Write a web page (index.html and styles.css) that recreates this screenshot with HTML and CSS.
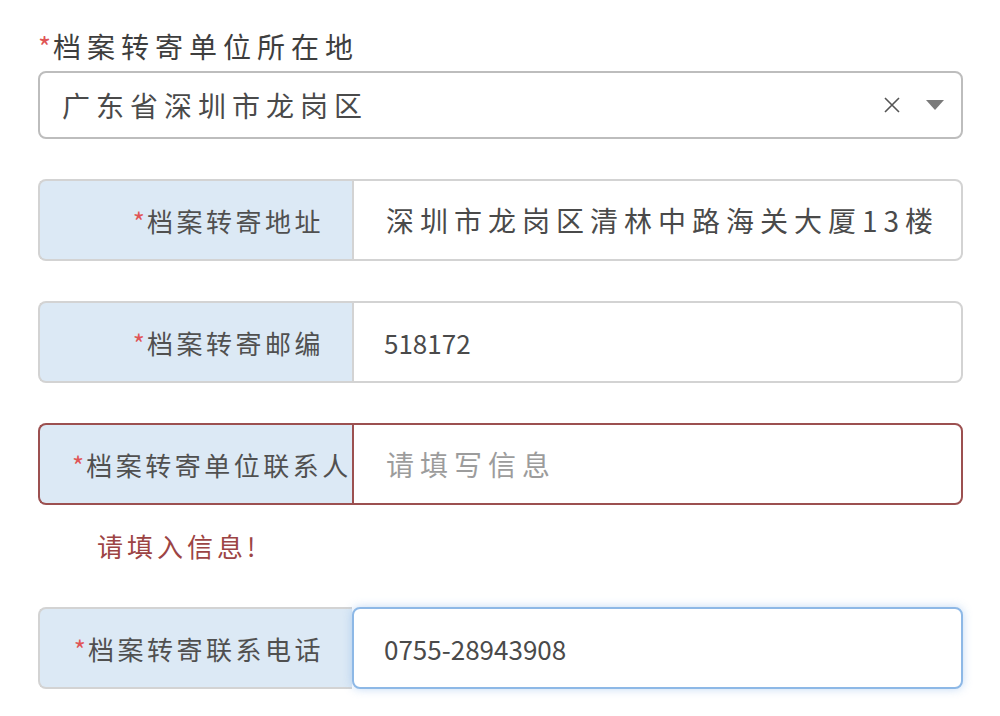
FILE: index.html
```html
<!DOCTYPE html>
<html lang="zh-CN">
<head>
    <meta charset="UTF-8">
    <meta name="viewport" content="width=device-width, initial-scale=1.0">
    <title>档案转寄信息</title>
    <link rel="stylesheet" href="styles.css">
</head>
<body>
    <form class="form">
        <!-- 所在地 -->
        <div class="block-label"><span class="req">*</span>档案转寄单位所在地</div>
        <div class="select">
            <span class="select-value">广东省深圳市龙岗区</span>
            <span class="select-clear">
                <svg width="18" height="18" viewBox="0 0 18 18">
                    <path d="M2 2 L16 16 M16 2 L2 16" stroke="#555" stroke-width="1.6" fill="none" />
                </svg>
            </span>
            <span class="select-arrow">
                <svg width="20" height="12" viewBox="0 0 20 12">
                    <path d="M1 1 L19 1 L10 11 Z" fill="#7a7a7a" />
                </svg>
            </span>
        </div>

        <div class="field">
            <label class="field-label"><span class="req">*</span>档案转寄地址</label>
            <input class="field-input" type="text" value="深圳市龙岗区清林中路海关大厦13楼">
        </div>

        <div class="field">
            <label class="field-label"><span class="req">*</span>档案转寄邮编</label>
            <input class="field-input num" type="text" value="518172">
        </div>

        <div class="field is-error">
            <label class="field-label"><span class="req">*</span>档案转寄单位联系人</label>
            <input class="field-input" type="text" placeholder="请填写信息">
        </div>
        <div class="error-msg">请填入信息!</div>

        <div class="field is-focus">
            <label class="field-label"><span class="req">*</span>档案转寄联系电话</label>
            <input class="field-input num" type="text" value="0755-28943908">
        </div>
    </form>
</body>
</html>
```

FILE: styles.css
```css
body {
    margin: 0;
    background: #fff;
    font-family: "Noto Sans CJK SC", "Noto Sans", sans-serif;
    color: #4a4a4a;
}
.form {
    padding: 26px 37px 20px 38px;
}
.req {
    color: #e05555;
    letter-spacing: 0;
    margin-right: 2px;
}
.block-label {
    font-size: 28px;
    line-height: 40px;
    letter-spacing: 6px;
    color: #3e3e3e;
}
.select {
    margin-top: 5px;
    height: 68px;
    box-sizing: border-box;
    border: 2px solid #bdbdbd;
    border-radius: 8px;
    display: flex;
    align-items: center;
    padding: 0 16px 0 22px;
}
.select-value {
    flex: 1;
    font-size: 28px;
    letter-spacing: 6px;
}
.select-clear {
    display: flex;
    margin-right: 24px;
}
.select-arrow {
    display: flex;
}
.field {
    display: flex;
    height: 82px;
    margin-top: 40px;
}
.field-label {
    width: 314px;
    box-sizing: border-box;
    flex-shrink: 0;
    background: #dce9f5;
    border: 2px solid #d3d3d3;
    border-right: none;
    border-radius: 8px 0 0 8px;
    display: flex;
    align-items: center;
    justify-content: flex-end;
    padding: 0 28px 0 32px;
    font-size: 26px;
    letter-spacing: 3.5px;
    white-space: nowrap;
    color: #505050;
}
.field-input {
    flex: 1;
    min-width: 0;
    margin: 0;
    box-sizing: border-box;
    border: 2px solid #d3d3d3;
    border-radius: 0 8px 8px 0;
    background: #fff;
    padding: 0 20px 0 32px;
    font-family: inherit;
    font-size: 28px;
    letter-spacing: 6px;
    color: #4a4a4a;
    outline: none;
}
.field-input.num {
    font-size: 26px;
    letter-spacing: 0;
    padding-left: 30px;
}
.field-input::placeholder {
    color: #9c9c9c;
}
.is-error .field-label,
.is-error .field-input {
    border-color: #9c5050;
}
.is-error .field-label {
    justify-content: flex-start;
}
.error-msg {
    margin-top: 21px;
    padding-left: 59px;
    font-size: 26px;
    line-height: 40px;
    letter-spacing: 4px;
    color: #9c4444;
}
.is-error + .error-msg + .field {
    margin-top: 41px;
}
.is-focus .field-input {
    border-color: #8db8e6;
    box-shadow: 0 0 10px rgba(120, 170, 230, 0.45);
    border-radius: 8px;
}
```
